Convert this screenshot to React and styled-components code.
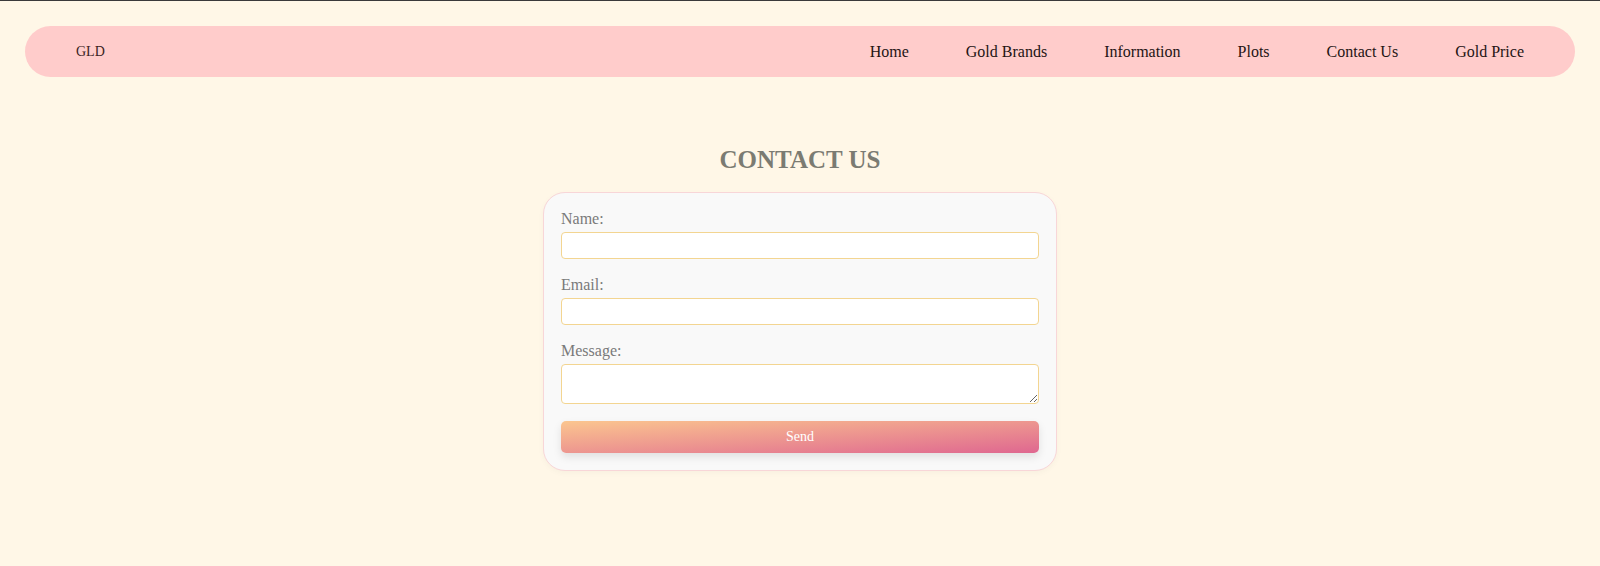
import * as React from "react";
import styled, { createGlobalStyle } from "styled-components";

const GlobalStyle = createGlobalStyle`
  html, body {
    margin: 0;
    padding: 0;
  }
  body {
    background: #fff7e7;
    border-top: 1px solid #3a3a3a;
    font-family: "Liberation Serif", "Times New Roman", serif;
    min-height: 565px;
  }
`;

const Page = styled.div`
  padding: 25px 25px 0;
`;

const NavBar = styled.nav`
  display: flex;
  align-items: center;
  justify-content: space-between;
  height: 51px;
  padding: 0 51px 0 51px;
  background: #ffcccb;
  border-radius: 26px;
`;

const Logo = styled.div`
  font-size: 14px;
  color: #3a2323;
`;

const NavLinks = styled.ul`
  display: flex;
  gap: 57px;
  margin: 0;
  padding: 0;
  list-style: none;
  a {
    font-size: 16px;
    color: #241414;
    text-decoration: none;
  }
`;

const Main = styled.main`
  display: flex;
  flex-direction: column;
  align-items: center;
  padding-top: 69px;
`;

const Title = styled.h2`
  margin: 0 0 18px;
  font-size: 25px;
  font-weight: bold;
  color: #7b7b72;
`;

const Card = styled.form`
  box-sizing: border-box;
  width: 514px;
  padding: 17px 17px 17px;
  background: #f9f9f9;
  border: 1px solid #f8d6d8;
  border-radius: 22px;
  box-shadow: 0 2px 6px rgba(0, 0, 0, 0.03);
`;

const Label = styled.label`
  display: block;
  margin-bottom: 4px;
  font-size: 16px;
  color: #7a7a7a;
`;

const Field = styled.input`
  display: block;
  box-sizing: border-box;
  width: 100%;
  height: ${(p) => p.$h || 27}px;
  margin: 0 0 17px;
  padding: 4px 6px;
  background: #fff;
  border: 1px solid #f3d591;
  border-radius: 4px;
  font-family: inherit;
  font-size: 14px;
  outline: none;
`;

const SendButton = styled.button`
  display: block;
  width: 100%;
  height: 32px;
  margin-top: 1px;
  border: none;
  border-radius: 5px;
  background: linear-gradient(to bottom right, #fbc68f, #df6790);
  box-shadow: 0 4px 8px rgba(0, 0, 0, 0.1);
  color: #fff;
  font-family: inherit;
  font-size: 14px;
  cursor: pointer;
`;

const links = ["Home", "Gold Brands", "Information", "Plots", "Contact Us", "Gold Price"];

export default function App() {
  return (
    <>
      <GlobalStyle />
      <Page>
        <NavBar>
          <Logo>GLD</Logo>
          <NavLinks>
            {links.map((l) => (
              <li key={l}>
                <a href="#">{l}</a>
              </li>
            ))}
          </NavLinks>
        </NavBar>
        <Main>
          <Title>CONTACT US</Title>
          <Card onSubmit={(e) => e.preventDefault()}>
            <Label htmlFor="name">Name:</Label>
            <Field id="name" type="text" />
            <Label htmlFor="email">Email:</Label>
            <Field id="email" type="email" />
            <Label htmlFor="message">Message:</Label>
            <Field as="textarea" id="message" $h={40} />
            <SendButton type="submit">Send</SendButton>
          </Card>
        </Main>
      </Page>
    </>
  );
}
